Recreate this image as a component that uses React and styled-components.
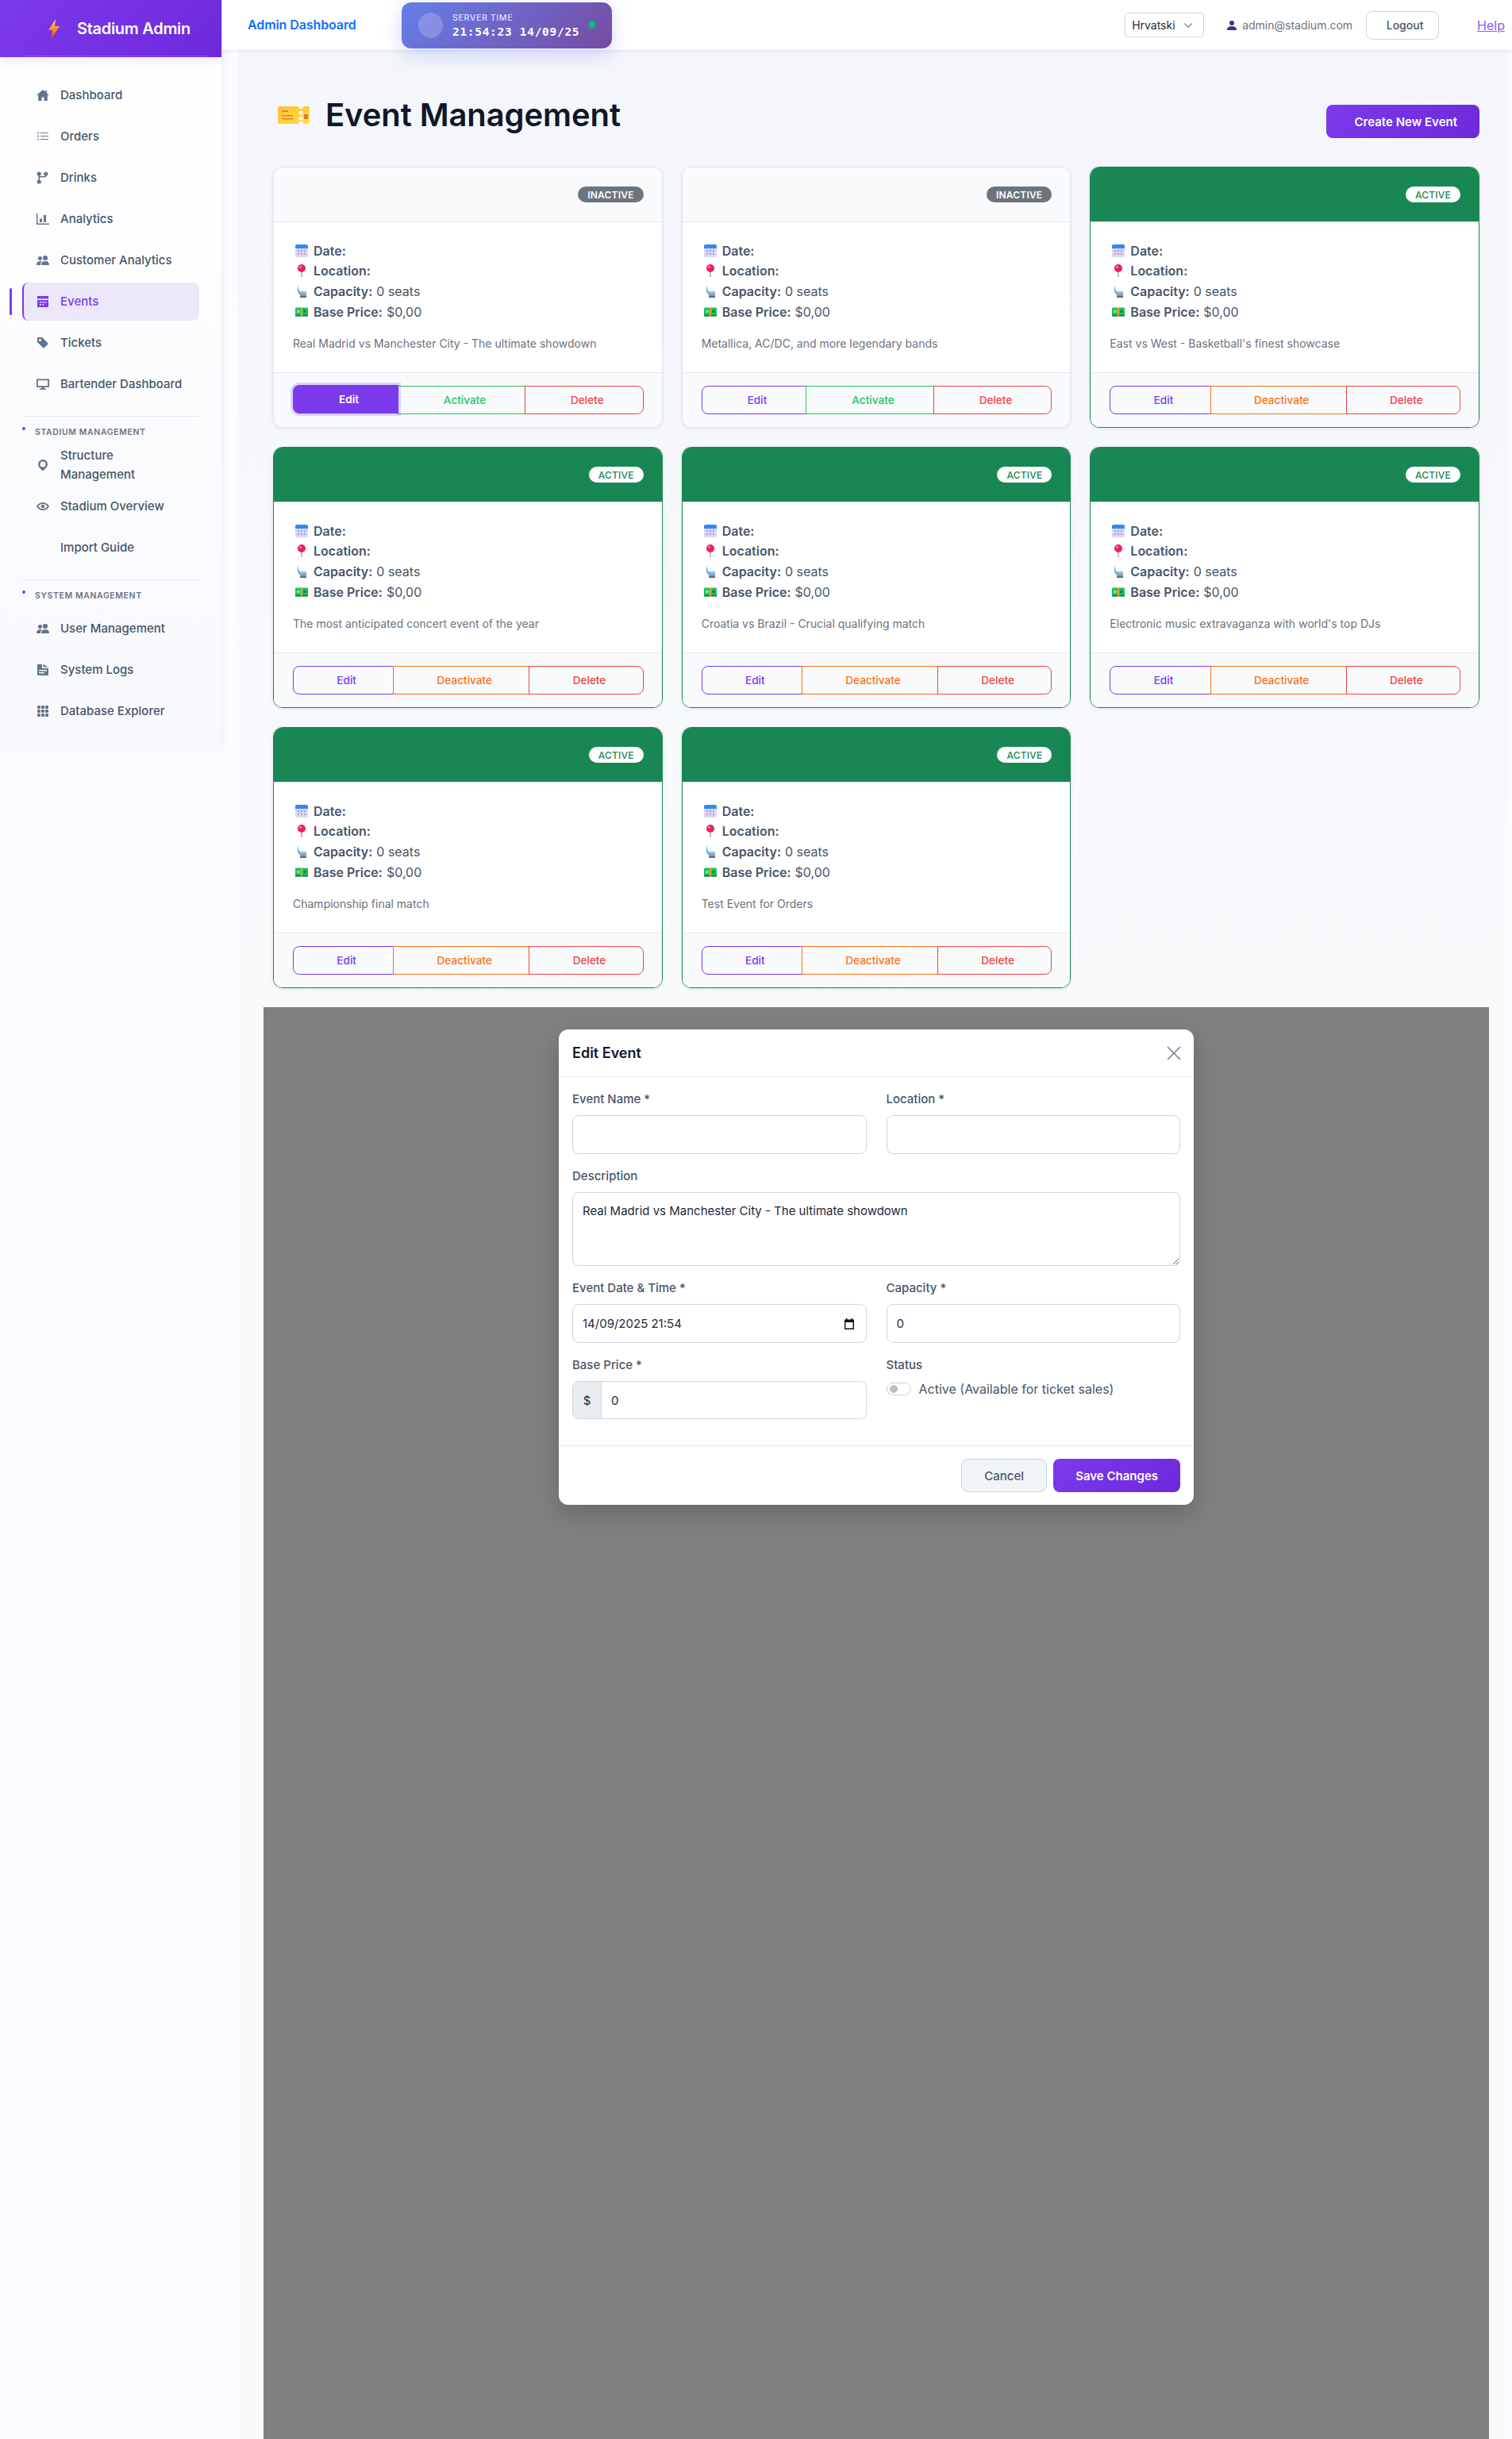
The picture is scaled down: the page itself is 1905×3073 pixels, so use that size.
import React from 'react';
import styled, { createGlobalStyle } from 'styled-components';
import {
  BsListUl, BsPeopleFill, BsTagFill, BsGrid3X3GapFill, BsChevronDown, BsPersonFill,
} from 'react-icons/bs';

const GlobalStyle = createGlobalStyle`
  html, body {
    margin: 0;
    padding: 0;
    background: #fafbfe;
    font-family: 'Inter', 'Liberation Sans', sans-serif;
    color: #1e293b;
  }
  * { box-sizing: border-box; }
`;

// --- SIDEBAR ---

const Page = styled.div`
  display: flex;
  width: 1905px;
  height: 3073px;
  overflow: hidden;
`;

const Sidebar = styled.aside`
  width: 280px;
  height: 945px;
  flex-shrink: 0;
  background: linear-gradient(180deg, #ffffff 0%, #f8f9fd 100%);
  border-right: 1px solid #eef0f6;
  box-shadow: 2px 0 8px rgba(30, 41, 59, 0.03);
`;

const Brand = styled.div`
  position: relative;
  height: 72px;
  padding-left: 61px;
  display: flex;
  align-items: center;
  gap: 22px;
  background: linear-gradient(135deg, #7c3aed, #6d28d9);
  box-shadow: 0 4px 12px rgba(124, 58, 237, 0.12);
  color: #fff;
  font-size: 20px;
  font-weight: 600;
  letter-spacing: -0.3px;
  &::after {
    content: '';
    position: absolute;
    left: 28px;
    right: 17px;
    bottom: 1px;
    height: 1px;
    background: rgba(255, 255, 255, 0.2);
  }
`;

const Nav = styled.nav`
  padding: 24px 28px 0;
  display: flex;
  flex-direction: column;
  gap: 4px;
`;

const NavItem = styled.div`
  position: relative;
  height: 48px;
  padding: 0 18px;
  display: flex;
  align-items: center;
  gap: 14px;
  border-radius: 8px;
  font-size: 15px;
  line-height: 24px;
  font-weight: 500;
  color: ${p => (p.$active ? '#7c3aed' : '#475569')};
  background: ${p => (p.$active ? '#ede7fa' : 'transparent')};
  border-left: ${p => (p.$active ? '2px solid #7c3aed' : '0')};
  svg { color: ${p => (p.$active ? '#7c3aed' : '#64748b')}; flex-shrink: 0; }
  ${p => p.$active && `
    padding-left: 16px;
    &::before {
      content: '';
      position: absolute;
      left: -18px;
      top: 7px;
      width: 3px;
      height: 34px;
      border-radius: 2px;
      background: #7c3aed;
    }
  `}
`;

const IconSlot = styled.span`
  width: 16px;
  height: 16px;
  flex-shrink: 0;
`;

const NavDivider = styled.div`
  height: 1px;
  background: #e2e8f0;
  margin: 12px 0 0;
`;

const SectionTitle = styled.div`
  position: relative;
  height: 21px;
  margin: 4px 0;
  padding: 4px 0 0 16px;
  font-size: 10.5px;
  line-height: 16px;
  font-weight: 600;
  letter-spacing: 0.6px;
  text-transform: uppercase;
  color: #6b7280;
  &::before {
    content: '';
    position: absolute;
    left: 0;
    top: 5px;
    width: 4px;
    height: 4px;
    border-radius: 50%;
    background: #7c3aed;
  }
`;

// --- TOP BAR ---

const Main = styled.main`
  flex: 1;
  min-width: 0;
  display: flex;
  flex-direction: column;
`;

const TopBar = styled.header`
  position: relative;
  z-index: 2;
  height: 63px;
  flex-shrink: 0;
  padding: 0 9px 0 32px;
  display: flex;
  align-items: center;
  background: #fff;
  box-shadow: 0 1px 4px rgba(30, 41, 59, 0.1);
`;

const TopTitle = styled.a`
  width: 194px;
  color: #0d6efd;
  font-size: 16px;
  font-weight: 600;
  letter-spacing: -0.1px;
  margin-top: -1px;
`;

const ServerBadge = styled.div`
  width: 265px;
  height: 58px;
  margin-top: 1px;
  padding: 0 21px;
  display: flex;
  align-items: center;
  gap: 12px;
  border-radius: 12px;
  background: linear-gradient(135deg, #667eea, #764ba2);
  box-shadow: 0 8px 24px rgba(102, 126, 234, 0.28);
  color: #fff;
`;

const ClockDot = styled.div`
  width: 32px;
  height: 32px;
  border-radius: 50%;
  background: rgba(255, 255, 255, 0.2);
`;

const ServerText = styled.div`
  display: flex;
  flex-direction: column;
  gap: 1px;
`;

const ServerLabel = styled.span`
  font-size: 10.8px;
  line-height: 14px;
  font-weight: 500;
  letter-spacing: 0.5px;
  color: rgba(255, 255, 255, 0.8);
`;

const ServerClock = styled.span`
  font-family: 'DejaVu Sans Mono', 'Liberation Mono', monospace;
  font-size: 14.5px;
  line-height: 18px;
  font-weight: 700;
  letter-spacing: 0.7px;
  white-space: nowrap;
`;

const LiveDot = styled.div`
  width: 8px;
  height: 8px;
  margin: -3px 0 0 0;
  border-radius: 50%;
  background: #10b981;
  box-shadow: 0 0 6px rgba(16, 185, 129, 0.7);
`;

const TopRight = styled.div`
  margin-left: auto;
  display: flex;
  align-items: center;
`;

const LangSelect = styled.div`
  width: 100px;
  height: 31px;
  padding: 0 13px 0 8px;
  display: flex;
  align-items: center;
  justify-content: space-between;
  border: 1px solid #cbd5e1;
  border-radius: 4px;
  font-size: 14px;
  color: #1e293b;
  margin-right: 27px;
`;

const UserEmail = styled.div`
  display: flex;
  align-items: center;
  gap: 5px;
  font-size: 14px;
  color: #6b7280;
  margin-right: 17px;
  svg { color: #4c2a85; }
`;

const LogoutButton = styled.button`
  width: 92px;
  height: 36px;
  padding: 0 0 0 6px;
  background: #fff;
  border: 1px solid #cbd5e1;
  border-radius: 8px;
  font: 500 14px 'Inter', sans-serif;
  color: #475569;
  margin-right: 48px;
`;

const HelpLink = styled.a`
  font-size: 16px;
  color: #8b5cf6;
  text-decoration: underline;
`;

// --- CONTENT ---

const Content = styled.section`
  flex: 1;
  min-height: 0;
  margin: 0 5px 0 20px;
  padding: 58px 24px 0 32px;
  display: flex;
  flex-direction: column;
  background: linear-gradient(180deg, #f4f6fb 0%, #f8fafc 40%);
`;

const PageHeader = styled.div`
  padding: 0 12px;
  height: 53px;
  margin-bottom: 36px;
  display: flex;
  justify-content: space-between;
  align-items: flex-end;
`;

const PageTitle = styled.h1`
  margin: 0 0 5px 6px;
  display: flex;
  align-items: center;
  gap: 20px;
  font-size: 40px;
  line-height: 48px;
  font-weight: 600;
  color: #0f172a;
  letter-spacing: -0.1px;
`;

const PrimaryButton = styled.button`
  height: 42px;
  border: 0;
  border-radius: 8px;
  background: linear-gradient(135deg, #7c3aed, #6d28d9);
  color: #fff;
  font: 600 15px 'Inter', sans-serif;
  padding: ${p => p.$pad || '0 28px'};
`;

const CardGrid = styled.div`
  padding: 0 12px;
  display: grid;
  grid-template-columns: repeat(3, 1fr);
  gap: 24px;
`;

const Card = styled.article`
  height: 329px;
  display: flex;
  flex-direction: column;
  border: 1px solid ${p => (p.$active ? '#198754' : '#e2e8f0')};
  border-radius: 12px;
  overflow: hidden;
  background: #fff;
  box-shadow: 0 1px 4px rgba(30, 41, 59, 0.1);
`;

const CardHeader = styled.div`
  height: 69px;
  flex-shrink: 0;
  padding: 24px 23px 0;
  display: flex;
  justify-content: flex-end;
  align-items: flex-start;
  background: ${p => (p.$active ? '#198754' : '#f8fafc')};
  border-bottom: 1px solid #e2e8f0;
`;

const StatusBadge = styled.span`
  height: 20px;
  padding: 0 12px;
  display: inline-flex;
  align-items: center;
  border-radius: 10px;
  font-size: 12px;
  font-weight: ${p => (p.$active ? 500 : 600)};
  letter-spacing: 0.2px;
  background: ${p => (p.$active ? '#fff' : '#6c757d')};
  color: ${p => (p.$active ? '#198754' : '#fff')};
`;

const CardBody = styled.div`
  flex: 1;
  padding: 23px 24px 0;
`;

const InfoRow = styled.div`
  height: 25.6px;
  display: flex;
  align-items: center;
  font-size: 16px;
  color: #475569;
  svg { flex-shrink: 0; margin: 0 7px 0 3px; }
  b { font-weight: 600; margin-right: 5px; }
`;

const Description = styled.p`
  margin: 17px 0 0;
  font-size: 14px;
  line-height: 21px;
  color: #6b7280;
`;

const CardFooter = styled.div`
  height: 69px;
  flex-shrink: 0;
  padding: 16px 23px 0 24px;
  display: flex;
  background: #f8fafc;
  border-top: 1px solid #e2e8f0;
`;

const buttonColors = { edit: '#7c3aed', toggleOn: '#22c55e', toggleOff: '#f97316', remove: '#ef4444' };

const GroupButton = styled.button`
  flex: 1 1 auto;
  height: 36px;
  margin-left: -1px;
  padding: 0 0 0 8px;
  background: transparent;
  border: 1px solid ${p => buttonColors[p.$kind]};
  color: ${p => buttonColors[p.$kind]};
  font: 500 13.6px 'Inter', sans-serif;
  &:first-child { margin-left: 0; border-radius: 8px 0 0 8px; }
  &:last-child { border-radius: 0 8px 8px 0; }
  ${p => p.$focused && `
    position: relative;
    z-index: 1;
    transform: translateY(-1px);
    background: #7c3aed;
    color: #fff;
    font-weight: 600;
    box-shadow: 0 0 0 3px rgba(124, 58, 237, 0.2);
  `}
`;

// --- MODAL ---

const Backdrop = styled.div`
  flex: 1;
  margin-top: 24px;
  padding-top: 28px;
  background: #7f8082;
`;

const Modal = styled.div`
  width: 800px;
  height: 599px;
  margin: 0 auto;
  background: #fff;
  border-radius: 12px;
  box-shadow: 0 10px 30px rgba(0, 0, 0, 0.2);
  display: flex;
  flex-direction: column;
`;

const ModalHeader = styled.div`
  height: 60px;
  flex-shrink: 0;
  padding: 0 16px 0 17px;
  display: flex;
  justify-content: space-between;
  align-items: center;
  border-bottom: 1px solid #e2e8f0;
`;

const ModalTitle = styled.h5`
  margin: 0;
  font-size: 18px;
  font-weight: 600;
  color: #0f172a;
`;

const ModalBody = styled.div`
  flex: 1;
  padding: 18px 17px 0;
  display: grid;
  grid-template-columns: 1fr 1fr;
  column-gap: 25px;
  row-gap: 18px;
  align-content: start;
`;

const Field = styled.div`
  grid-column: ${p => (p.$wide ? '1 / -1' : 'auto')};
`;

const Label = styled.div`
  height: 20px;
  margin-bottom: 10px;
  font-size: 15px;
  line-height: 20px;
  font-weight: 500;
  color: #475569;
`;

const Input = styled.div`
  height: ${p => p.$height || '49px'};
  padding: 0 14px 0 12px;
  display: flex;
  align-items: center;
  justify-content: space-between;
  border: 1px solid #cbd5e1;
  border-radius: 8px;
  font-size: 15px;
  color: #1e293b;
`;

const TextArea = styled.textarea`
  display: block;
  width: 100%;
  height: 93px;
  padding: 13px 12px;
  border: 1px solid #cbd5e1;
  border-radius: 8px;
  font: 15px/20px 'Inter', sans-serif;
  color: #1e293b;
  resize: vertical;
`;

const PriceGroup = styled.div`
  height: 48px;
  display: flex;
  border: 1px solid #cbd5e1;
  border-radius: 8px;
  overflow: hidden;
  font-size: 15px;
`;

const PriceAddon = styled.div`
  width: 36px;
  display: flex;
  align-items: center;
  justify-content: center;
  background: #e9ecef;
  border-right: 1px solid #cbd5e1;
`;

const PriceValue = styled.div`
  padding-left: 12px;
  display: flex;
  align-items: center;
`;

const SwitchRow = styled.div`
  display: flex;
  align-items: center;
  gap: 10px;
  margin-top: 4px;
  font-size: 16px;
  color: #475569;
`;

const Switch = styled.div`
  width: 31px;
  height: 16px;
  padding: 2px 3px;
  border: 1px solid #cbd5e1;
  border-radius: 8px;
  &::before {
    content: '';
    display: block;
    width: 10px;
    height: 10px;
    border-radius: 50%;
    background: #bfbfbf;
  }
`;

const ModalFooter = styled.div`
  height: 75px;
  flex-shrink: 0;
  padding: 16px 17px 0;
  display: flex;
  justify-content: flex-end;
  gap: 8px;
  border-top: 1px solid #e2e8f0;
`;

const CancelButton = styled.button`
  width: 108px;
  height: 42px;
  background: #f1f5f9;
  border: 1px solid #cbd5e1;
  border-radius: 8px;
  font: 500 15px 'Inter', sans-serif;
  color: #475569;
`;

// --- DRAWN ICONS ---

const HomeIcon = () => (
  <svg width="16" height="16" viewBox="0 0 16 16" fill="currentColor">
    <path d="M8 1 0 8h2.2v7h4.3v-4.5h3V15h4.3V8H16l-3-2.6V2h-1.8v1.8z" />
  </svg>
);

const DrinksIcon = () => (
  <svg width="16" height="16" viewBox="0 0 16 16" fill="currentColor">
    <circle cx="3.2" cy="3" r="2.6" />
    <circle cx="11.8" cy="3" r="2.6" />
    <circle cx="3.2" cy="13" r="2.6" />
    <path d="M2.4 3h1.6v10H2.4zM11 3h1.6v2.2a2.4 2.4 0 0 1-2.4 2.4H4v-1.6h6a1 1 0 0 0 1-1z" />
  </svg>
);

const ChartIcon = () => (
  <svg width="16" height="16" viewBox="0 0 16 16" fill="currentColor">
    <path d="M0 1h1.5v12.5H16V15H0z" />
    <path d="M4 7.5h3v4.5H4zM9 3h3v9H9z" />
  </svg>
);

const CalendarIcon = () => (
  <svg width="16" height="16" viewBox="0 0 16 16" fill="currentColor">
    <path d="M1 1h14v3.4H1z" />
    <path
      fillRule="evenodd"
      d="M1 6h14v9H1zM4 8v1.6h2V8zM7.2 8v1.6h2V8zM10.4 8v1.6h2V8zM4 11v1.6h2V11zM7.2 11v1.6h2V11z"
    />
  </svg>
);

const MonitorIcon = () => (
  <svg width="16" height="16" viewBox="0 0 16 16" fill="currentColor">
    <path fillRule="evenodd" d="M0 1.5h16V12H9.5v1.5H12V15H4v-1.5h2.5V12H0zM1.8 3.2v7h12.4v-7z" />
  </svg>
);

const PinIcon = () => (
  <svg width="16" height="16" viewBox="0 0 16 16" fill="currentColor">
    <path
      fillRule="evenodd"
      d="M8 1a6 6 0 0 1 6 6c0 3-3.4 6.4-6 8.2C5.4 13.4 2 10 2 7a6 6 0 0 1 6-6zm0 2.4A3.6 3.6 0 1 0 8 10.6 3.6 3.6 0 0 0 8 3.4z"
    />
  </svg>
);

const EyeIcon = () => (
  <svg width="16" height="16" viewBox="0 0 16 16" fill="currentColor">
    <path
      fillRule="evenodd"
      d="M8 3c3.6 0 6.5 2.4 8 5-1.5 2.6-4.4 5-8 5s-6.5-2.4-8-5c1.5-2.6 4.4-5 8-5zm0 1.7C5.6 4.700 3.500 6.100 2.100 8c1.400 1.900 3.500 3.300 5.900 3.300s4.500-1.400 5.900-3.300C12.500 6.100 10.400 4.700 8 4.700z"
    />
    <circle cx="8" cy="8" r="2.2" />
  </svg>
);

const LogsIcon = () => (
  <svg width="16" height="16" viewBox="0 0 16 16" fill="currentColor">
    <path
      fillRule="evenodd"
      d="M1 1h6v5h8v9H1zM3 8v1.4h10V8zM3 11v1.4h7V11z"
    />
    <path d="M8.5 1v3.6H15z" />
  </svg>
);

const CloseIcon = () => (
  <svg width="18" height="18" viewBox="0 0 18 18" fill="none" stroke="#64748b" strokeWidth="1.4">
    <path d="M1 1l16 16M17 1 1 17" />
  </svg>
);

const BoltEmoji = () => (
  <svg width="14" height="24" viewBox="0 0 14 24">
    <defs>
      <linearGradient id="bolt" x1="0" y1="0" x2="0" y2="1">
        <stop offset="0" stopColor="#fdd835" />
        <stop offset="1" stopColor="#f4511e" />
      </linearGradient>
    </defs>
    <path d="M9 0 0 14h5l-1 10 10-15H8z" fill="url(#bolt)" />
  </svg>
);

const TicketEmoji = () => (
  <svg width="40" height="22" viewBox="0 0 40 22">
    <defs>
      <linearGradient id="ticket" x1="0" y1="0" x2="1" y2="1">
        <stop offset="0" stopColor="#f9c22e" />
        <stop offset="1" stopColor="#fde047" />
      </linearGradient>
    </defs>
    <path
      d="M2 0h24a3 3 0 0 0 6 0h6a2 2 0 0 1 2 2v18a2 2 0 0 1-2 2h-6a3 3 0 0 0-6 0H2a2 2 0 0 1-2-2V2a2 2 0 0 1 2-2z"
      fill="url(#ticket)"
    />
    <circle cx="29" cy="8" r="2.6" fill="#fff8e1" />
    <circle cx="29" cy="15" r="2.6" fill="#fff8e1" />
    <path d="M5 5h8v2H5zM5 11h14v1.6H5zM5 15h14v1.6H5z" fill="#e0823f" />
    <path d="M33 10h5v6h-5z" fill="#d9773b" />
  </svg>
);

const CalEmoji = () => (
  <svg width="16" height="16" viewBox="0 0 16 16">
    <rect y="0.5" width="16" height="15.5" rx="2" fill="#ddd6f3" />
    <path d="M2 0h12a2 2 0 0 1 2 2v3H0V2a2 2 0 0 1 2-2z" fill="#2f8af5" />
    <path d="M3 7h2v2H3zM7 7h2v2H7zM11 7h2v2h-2zM3 11h2v2H3zM7 11h2v2H7zM11 11h2v2h-2z" fill="#a79fd0" />
  </svg>
);

const PinEmoji = () => (
  <svg width="16" height="16" viewBox="0 0 16 16">
    <rect x="7.3" y="8" width="1.4" height="8" fill="#9e9e9e" />
    <circle cx="8" cy="5" r="5" fill="#ec1e63" />
    <circle cx="6.6" cy="3.4" r="1.4" fill="#f78fb3" />
  </svg>
);

const SeatEmoji = () => (
  <svg width="16" height="16" viewBox="0 0 16 16">
    <path d="M3 0 5 8h8v4H5L3 8z" fill="#4fb3e8" />
    <path d="M6 8h8v3H6z" fill="#7ec8f0" />
    <path d="M6 11h8v2.5H6z" fill="#9a8fb5" />
    <path d="M6 13.5h8V16H6z" fill="#5d6b7a" />
  </svg>
);

const CashEmoji = () => (
  <svg width="16" height="16" viewBox="0 0 16 16">
    <rect y="2.5" width="16" height="11" rx="1" fill="#21c25e" />
    <rect y="11.5" width="16" height="2" fill="#0f8a3f" />
    <rect x="7" y="2.5" width="2" height="11" fill="#f0a030" />
    <circle cx="4" cy="7.500" r="2" fill="#7ee2a4" />
    <circle cx="12" cy="7.500" r="2" fill="#0f8a3f" />
  </svg>
);

const CalendarPicker = () => (
  <svg width="14" height="14" viewBox="0 0 14 14" fill="#111">
    <path fillRule="evenodd" d="M3 0h1.500v1.500h5V0H11v1.500h2V14H1V1.500h2zM2.400 5v7.600h9.200V5z" />
  </svg>
);

// --- DATA ---

const navMain = [
  { label: 'Dashboard', icon: <HomeIcon /> },
  { label: 'Orders', icon: <BsListUl size={16} /> },
  { label: 'Drinks', icon: <DrinksIcon /> },
  { label: 'Analytics', icon: <ChartIcon /> },
  { label: 'Customer Analytics', icon: <BsPeopleFill size={16} /> },
  { label: 'Events', icon: <CalendarIcon />, active: true },
  { label: 'Tickets', icon: <BsTagFill size={16} /> },
  { label: 'Bartender Dashboard', icon: <MonitorIcon /> },
];

const navStadium = [
  { label: 'Structure Management', icon: <PinIcon /> },
  { label: 'Stadium Overview', icon: <EyeIcon /> },
  { label: 'Import Guide', icon: <IconSlot /> },
];

const navSystem = [
  { label: 'User Management', icon: <BsPeopleFill size={16} /> },
  { label: 'System Logs', icon: <LogsIcon /> },
  { label: 'Database Explorer', icon: <BsGrid3X3GapFill size={16} /> },
];

const events = [
  { text: 'Real Madrid vs Manchester City - The ultimate showdown', active: false, focused: true },
  { text: 'Metallica, AC/DC, and more legendary bands', active: false },
  { text: "East vs West - Basketball's finest showcase", active: true },
  { text: 'The most anticipated concert event of the year', active: true },
  { text: 'Croatia vs Brazil - Crucial qualifying match', active: true },
  { text: "Electronic music extravaganza with world's top DJs", active: true },
  { text: 'Championship final match', active: true },
  { text: 'Test Event for Orders', active: true },
];

const NavLinks = ({ items }) =>
  items.map(item => (
    <NavItem key={item.label} $active={item.active}>
      {item.icon}
      <span>{item.label}</span>
    </NavItem>
  ));

const EventCard = ({ event }) => (
  <Card $active={event.active}>
    <CardHeader $active={event.active}>
      <StatusBadge $active={event.active}>{event.active ? 'ACTIVE' : 'INACTIVE'}</StatusBadge>
    </CardHeader>
    <CardBody>
      <InfoRow><CalEmoji /><b>Date:</b></InfoRow>
      <InfoRow><PinEmoji /><b>Location:</b></InfoRow>
      <InfoRow><SeatEmoji /><b>Capacity:</b>0 seats</InfoRow>
      <InfoRow><CashEmoji /><b>Base Price:</b>$0,00</InfoRow>
      <Description>{event.text}</Description>
    </CardBody>
    <CardFooter>
      <GroupButton $kind="edit" $focused={event.focused}>Edit</GroupButton>
      <GroupButton $kind={event.active ? 'toggleOff' : 'toggleOn'}>
        {event.active ? 'Deactivate' : 'Activate'}
      </GroupButton>
      <GroupButton $kind="remove">Delete</GroupButton>
    </CardFooter>
  </Card>
);

const App = () => {
  return (
    <>
      <GlobalStyle />
      <Page>
        <Sidebar>
          <Brand><BoltEmoji />Stadium Admin</Brand>
          <Nav>
            <NavLinks items={navMain} />
            <NavDivider />
            <SectionTitle>Stadium Management</SectionTitle>
            <NavLinks items={navStadium} />
            <NavDivider />
            <SectionTitle>System Management</SectionTitle>
            <NavLinks items={navSystem} />
          </Nav>
        </Sidebar>
        <Main>
          <TopBar>
            <TopTitle>Admin Dashboard</TopTitle>
            <ServerBadge>
              <ClockDot />
              <ServerText>
                <ServerLabel>SERVER TIME</ServerLabel>
                <ServerClock>21:54:23 14/09/25</ServerClock>
              </ServerText>
              <LiveDot />
            </ServerBadge>
            <TopRight>
              <LangSelect>Hrvatski<BsChevronDown size={12} /></LangSelect>
              <UserEmail><BsPersonFill size={16} />admin@stadium.com</UserEmail>
              <LogoutButton>Logout</LogoutButton>
              <HelpLink>Help</HelpLink>
            </TopRight>
          </TopBar>
          <Content>
            <PageHeader>
              <PageTitle><TicketEmoji />Event Management</PageTitle>
              <PrimaryButton $pad="0 28px 0 36px">Create New Event</PrimaryButton>
            </PageHeader>
            <CardGrid>
              {events.map(event => <EventCard key={event.text} event={event} />)}
            </CardGrid>
            <Backdrop>
              <Modal>
                <ModalHeader>
                  <ModalTitle>Edit Event</ModalTitle>
                  <CloseIcon />
                </ModalHeader>
                <ModalBody>
                  <Field><Label>Event Name *</Label><Input /></Field>
                  <Field><Label>Location *</Label><Input /></Field>
                  <Field $wide><Label>Description</Label><TextArea readOnly value="Real Madrid vs Manchester City - The ultimate showdown" /></Field>
                  <Field><Label>Event Date &amp; Time *</Label><Input>14/09/2025 21:54<CalendarPicker /></Input></Field>
                  <Field><Label>Capacity *</Label><Input>0</Input></Field>
                  <Field>
                    <Label>Base Price *</Label>
                    <PriceGroup><PriceAddon>$</PriceAddon><PriceValue>0</PriceValue></PriceGroup>
                  </Field>
                  <Field>
                    <Label>Status</Label>
                    <SwitchRow><Switch />Active (Available for ticket sales)</SwitchRow>
                  </Field>
                </ModalBody>
                <ModalFooter>
                  <CancelButton>Cancel</CancelButton>
                  <PrimaryButton $pad="0 28px">Save Changes</PrimaryButton>
                </ModalFooter>
              </Modal>
            </Backdrop>
          </Content>
        </Main>
      </Page>
    </>
  );
};

export default App;
